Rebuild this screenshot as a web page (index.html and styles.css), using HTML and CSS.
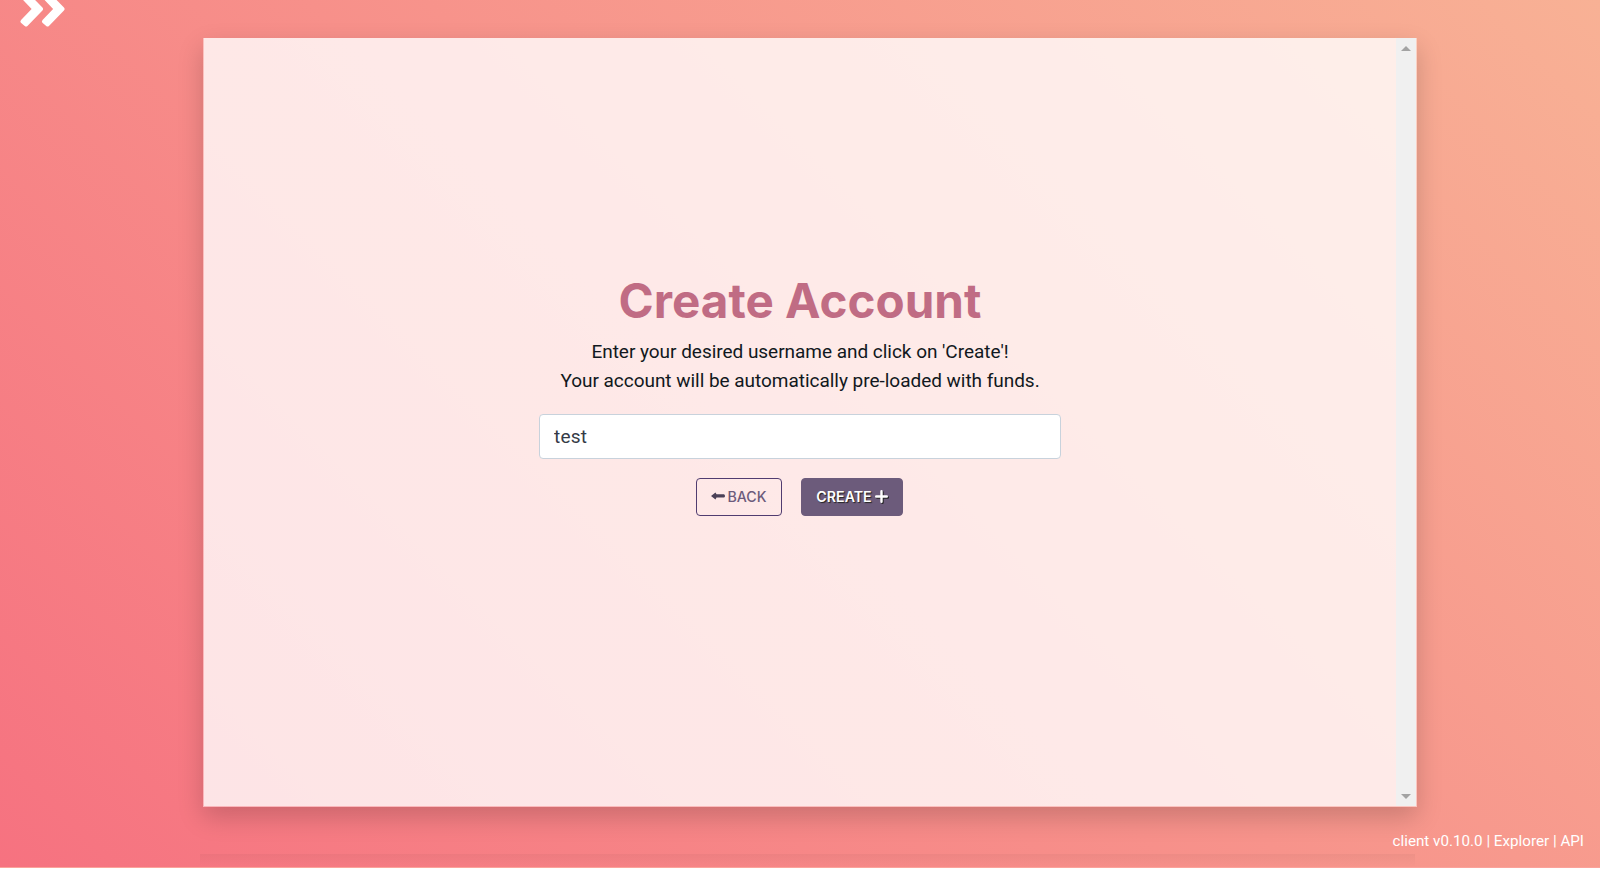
FILE: index.html
```
<!DOCTYPE html>
<html lang="en">
<head>
  <meta charset="UTF-8">
  <meta name="viewport" content="width=device-width, initial-scale=1.0">
  <title>Create Account</title>
  <link rel="stylesheet" href="styles.css">
</head>
<body>

<div class="page">
  <svg class="menu-toggle" viewBox="0 0 46 40">
    <path d="M21 20 L6 35.5 L2.5 32.5 L14.5 20 L2.5 7.5 L6 4.5 Z" />
    <path d="M42.5 20 L27.5 35.5 L24 32.5 L36 20 L24 7.5 L27.5 4.5 Z" />
  </svg>

  <main class="panel">
    <div class="content">
      <h1>Create Account</h1>
      <p>Enter your desired username and click on 'Create'!<br>Your account will be automatically pre-loaded with funds.</p>
      <input type="text" class="username" value="test">
      <div class="buttons">
        <button class="btn btn-outline">
          <svg class="icon-back" viewBox="0 0 14 8"><path d="M0 4 L4.5 0.5 L5.5 2.3 H13 Q14 2.8 14 4 Q14 5.4 13 5.6 H5.5 L4.5 7.5 Z" /></svg><span>BACK</span>
        </button>
        <button class="btn btn-primary">
          <span>CREATE</span><svg class="icon-plus" viewBox="0 0 13 13"><path d="M6.5 1.2 V11.8 M1.2 6.5 H11.8" /></svg>
        </button>
      </div>
    </div>
    <div class="scrollbar">
      <span class="arrow-up"></span>
      <span class="arrow-down"></span>
    </div>
  </main>

  <footer>client v0.10.0 | <a href="#">Explorer</a> | <a href="#">API</a></footer>
  <div class="bottom-shade"></div>
</div>

</body>
</html>
```
FILE: styles.css
```
* { margin: 0; padding: 0; box-sizing: border-box; }
body { background: #fff; font-family: Roboto, sans-serif; overflow: hidden; }
.page { position: relative; height: 868px; padding-top: 38px; background: linear-gradient(45deg, #f67280, #f8b195); border-bottom: 1px solid #fba39b; overflow: hidden; }
.menu-toggle { position: absolute; left: 20px; top: -11px; width: 46px; height: 40px; fill: #fff; stroke: #fff; stroke-width: 4; stroke-linejoin: round; }

.panel { display: flex; width: 1214px; height: 769px; margin-left: 203px; background: rgba(255, 255, 255, 0.8); background-clip: padding-box; border: 1px solid rgba(255, 255, 255, 0.45); border-top-width: 0; box-shadow: 0 10px 24px rgba(0, 0, 0, 0.18); }
.content { flex: 1; display: flex; flex-direction: column; align-items: center; padding-top: 233px; text-align: center; }
h1 { font-family: Inter, sans-serif; font-weight: 700; font-size: 47.6px; line-height: 59px; color: #c06c84; }
.content p { margin-top: 8px; font-size: 19px; line-height: 28.5px; letter-spacing: -0.03px; color: #111820; }
.username { width: 522px; height: 45px; margin-top: 19px; padding: 0 14px; border: 1px solid #c8d2dc; border-radius: 4px; background: #fff; font-family: Roboto, sans-serif; font-size: 19px; letter-spacing: 0.2px; color: #343a46; }
.buttons { display: flex; gap: 19px; margin: 19px 1px 0 0; }
.btn { display: flex; align-items: center; justify-content: center; height: 38px; padding-bottom: 2px; border: 1px solid #6c5b7b; border-radius: 4px; font-family: Inter, sans-serif; font-size: 14.2px; }
.btn-outline { width: 86px; gap: 2px; background: transparent; border-color: #503c70; font-weight: 500; color: #6c5b7b; }
.btn-primary { width: 102px; gap: 3px; background: #6c5b7b; font-weight: 600; color: #fff; text-shadow: 1px 1px 1px #222; }
.icon-back { width: 14px; height: 8px; fill: #4b4057; }
.icon-plus { width: 13px; height: 13px; fill: none; stroke: #fff; stroke-width: 2.4; stroke-linecap: round; filter: drop-shadow(1px 1px 0.5px #222); }

.scrollbar { display: flex; flex-direction: column; justify-content: space-between; align-items: center; width: 20px; padding: 8px 0 7px; background: #f0f0f0; }
.arrow-up { border: 5px solid transparent; border-top: 0; border-bottom-color: #a3a3a3; }
.arrow-down { border: 5px solid transparent; border-bottom: 0; border-top-color: #a3a3a3; }

footer { margin-top: 23px; padding-right: 16px; text-align: right; font-size: 15.2px; line-height: 22px; color: #fff; }
footer a { color: inherit; text-decoration: none; }
.bottom-shade { position: absolute; left: 200px; right: 185px; bottom: 0; height: 13px; background: linear-gradient(rgba(0, 0, 0, 0.04), transparent); }
```
